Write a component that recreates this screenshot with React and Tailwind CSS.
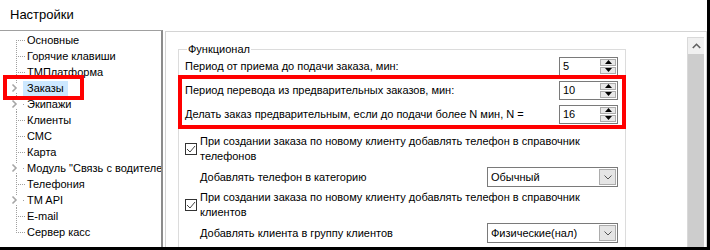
import React from "react";

const treeItems = [
  { t: "Основные", first: true },
  { t: "Горячие клавиши" },
  { t: "ТМПлатформа" },
  { t: "Заказы", exp: true, sel: true },
  { t: "Экипажи", exp: true },
  { t: "Клиенты" },
  { t: "СМС" },
  { t: "Карта" },
  { t: 'Модуль "Связь с водителем"', exp: true },
  { t: "Телефония" },
  { t: "TM API", exp: true },
  { t: "E-mail" },
  { t: "Сервер касс", last: true },
];

const Connector = ({ item }) => (
  <svg width="23" height="16" className="shrink-0 overflow-visible" shapeRendering="crispEdges">
    {item.exp ? (
      <>
        <line x1="16.5" y1="0" x2="16.5" y2="3" stroke="#a0a0a0" strokeDasharray="1 1" />
        <line x1="16.5" y1="13" x2="16.5" y2="16" stroke="#a0a0a0" strokeDasharray="1 1" />
        <polyline
          points="12.5,4.5 16,8 12.5,11.5"
          fill="none"
          stroke="#a6a6a6"
          strokeWidth="1.6"
          shapeRendering="auto"
        />
        <rect x="23" y="8" width="1" height="1" fill="#a0a0a0" />
      </>
    ) : (
      <>
        <line
          x1="16.5"
          y1={item.first ? 8 : 0}
          x2="16.5"
          y2={item.last ? 9 : 16}
          stroke="#a0a0a0"
          strokeDasharray="1 1"
        />
        <line x1="18" y1="8.5" x2="26" y2="8.5" stroke="#a0a0a0" strokeDasharray="1 1" />
      </>
    )}
  </svg>
);

const Spin = ({ value }) => (
  <div className="w-[59px] h-[19px] border border-[#7a7a7a] bg-white flex items-center">
    <span className="flex-1 pl-[3px] leading-[17px]">{value}</span>
    <div className="flex flex-col gap-[1px] w-[16px] mr-[1px]">
      <div className="h-[7px] border border-[#acacac] bg-[#e8e8e8] flex items-center justify-center">
        <svg width="7" height="4"><polygon points="3.5,0 7,4 0,4" fill="#000" /></svg>
      </div>
      <div className="h-[7px] border border-[#acacac] bg-[#e8e8e8] flex items-center justify-center">
        <svg width="7" height="4"><polygon points="0,0 7,0 3.5,4" fill="#000" /></svg>
      </div>
    </div>
  </div>
);

const Combo = ({ value }) => (
  <div className="w-[131px] h-[20px] border border-[#7a7a7a] bg-white flex items-center">
    <span className="flex-1 pl-[3px] leading-[18px]">{value}</span>
    <div className="w-[17px] h-[16px] mr-[1px] border border-[#acacac] bg-[#e5e5e5] flex items-center justify-center">
      <svg width="8" height="5">
        <polyline points="0.5,0.5 4,4 7.5,0.5" fill="none" stroke="#555" strokeWidth="1" />
      </svg>
    </div>
  </div>
);

const Check = () => (
  <div className="w-[12px] h-[12px] border border-[#333] bg-white flex items-center justify-center shrink-0">
    <svg width="10" height="10" viewBox="0 0 10 10">
      <polyline points="1,5 4,8 9,2" fill="none" stroke="#444" strokeWidth="1" />
    </svg>
  </div>
);

const SpinRow = ({ label, value }) => (
  <div className="h-[24px] flex items-center justify-between pl-[6px]">
    <span>{label}</span>
    <Spin value={value} />
  </div>
);

const CheckRow = ({ l1, l2 }) => (
  <div className="flex items-center pl-[6px] leading-[15px]">
    <Check />
    <div className="pl-[3px]">
      <div>{l1}</div>
      <div>{l2}</div>
    </div>
  </div>
);

const ComboRow = ({ label, value }) => (
  <div className="h-[24px] flex items-center justify-between pl-[21px]">
    <span>{label}</span>
    <Combo value={value} />
  </div>
);

export default function App() {
  return (
    <div className="relative w-[710px] h-[250px] overflow-hidden bg-white border-r-[3px] border-b-[3px] border-black text-[11px] text-black font-['Liberation_Sans',Arial,sans-serif] flex flex-col">
      <div className="h-[30px] shrink-0 flex items-center pl-[10px] text-[13px]">Настройки</div>

      <div className="flex flex-1 min-h-0">
        <div className="w-[163px] shrink-0 border-t border-t-[#a0a0a0] border-r-2 border-r-[#8c8c8c] pt-[1px] overflow-hidden">
          {treeItems.map((item) => (
            <div key={item.t} className="h-[16px] flex items-center whitespace-nowrap">
              <Connector item={item} />
              <span className={`px-[4px] h-[15px] leading-[15px] ${item.sel ? "bg-[#cce8ff]" : ""}`}>{item.t}</span>
            </div>
          ))}
        </div>

        <div className="ml-[2px] mt-[1px] w-[542px] border-l border-t border-r border-[#d4d4d4] flex">
          <div className="flex-1 min-w-0">
            <fieldset className="ml-[12px] mt-[12px] w-[448px] border border-[#dcdcdc] pr-[7px]">
              <legend className="ml-[8px] px-[1px] leading-[10px]">Функционал</legend>
              <SpinRow label="Период от приема до подачи заказа, мин:" value="5" />
              <SpinRow label="Период перевода из предварительных заказов, мин:" value="10" />
              <SpinRow label="Делать заказ предварительным, если до подачи более N мин, N =" value="16" />
              <div className="mt-[8px]">
                <CheckRow
                  l1="При создании заказа по новому клиенту добавлять телефон в справочник"
                  l2="телефонов"
                />
              </div>
              <div className="mt-[1px]">
                <ComboRow label="Добавлять телефон в категорию" value="Обычный" />
              </div>
              <div className="mt-[1px]">
                <CheckRow
                  l1="При создании заказа по новому клиенту добавлять телефон в справочник"
                  l2="клиентов"
                />
              </div>
              <div className="mt-[1px]">
                <ComboRow label="Добавлять клиента в группу клиентов" value="Физические(нал)" />
              </div>
              <div className="h-[20px]" />
            </fieldset>
          </div>
          <div className="w-[17px] mr-[2px] mt-[5px] border-l border-t border-[#d9d9d9] flex flex-col">
            <div className="h-[16px] bg-[#f0f0f0] flex items-center justify-center">
              <svg width="9" height="6">
                <polyline points="0.8,5 4.5,1.3 8.2,5" fill="none" stroke="#606060" strokeWidth="1.6" />
              </svg>
            </div>
            <div className="flex-1 bg-[#cdcdcd]" />
          </div>
        </div>
      </div>

      <div className="absolute left-[3px] top-[75px] w-[81px] h-[25px] border-4 border-[#ff0000]" />
      <div className="absolute left-[178px] top-[75px] w-[448px] h-[54px] border-4 border-[#ff0000]" />
    </div>
  );
}
